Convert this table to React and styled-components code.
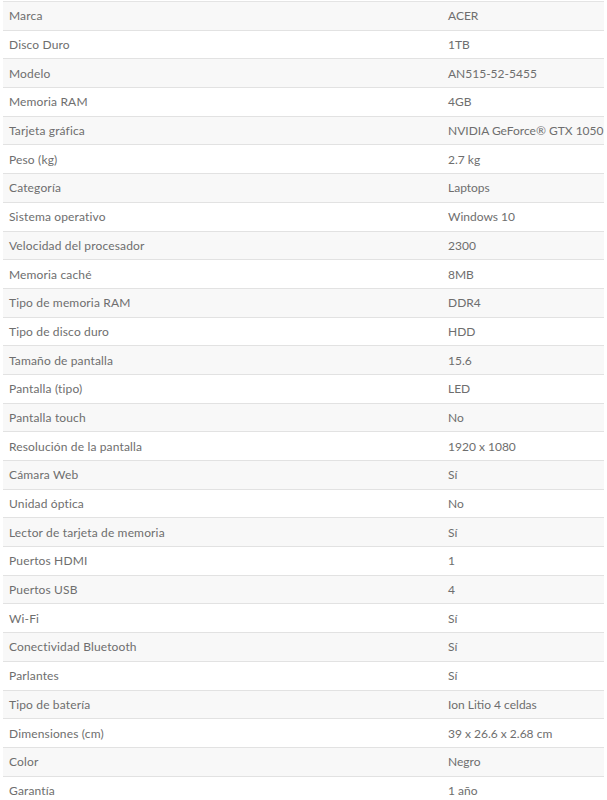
import { Fragment } from "react";
import styled, { createGlobalStyle } from "styled-components";

const Global = createGlobalStyle`
  body {
    margin: 0;
    background: #fff;
    font-family: Lato, "Open Sans", "Liberation Sans", sans-serif;
  }
`;

const Wrapper = styled.div`
  padding: 1px 3px 0 3px;
`;

const Table = styled.div`
  display: grid;
  grid-template-columns: 437px 1fr;
  border-top: 1px solid #e4e4e4;
`;

const Cell = styled.div`
  height: 27.7px;
  display: flex;
  align-items: center;
  padding-left: ${(p) => (p.$value ? "8px" : "6px")};
  background: ${(p) => (p.$odd ? "#f8f8f8" : "#fff")};
  border-bottom: 1px solid #e2e2e2;
  color: #6e6e6e;
  font-size: 12px;
  letter-spacing: ${(p) => (p.$value ? "0" : "0.15px")};
  white-space: nowrap;
`;

const rows = [
  ["Marca", "ACER"],
  ["Disco Duro", "1TB"],
  ["Modelo", "AN515-52-5455"],
  ["Memoria RAM", "4GB"],
  ["Tarjeta gráfica", "NVIDIA GeForce® GTX 1050"],
  ["Peso (kg)", "2.7 kg"],
  ["Categoría", "Laptops"],
  ["Sistema operativo", "Windows 10"],
  ["Velocidad del procesador", "2300"],
  ["Memoria caché", "8MB"],
  ["Tipo de memoria RAM", "DDR4"],
  ["Tipo de disco duro", "HDD"],
  ["Tamaño de pantalla", "15.6"],
  ["Pantalla (tipo)", "LED"],
  ["Pantalla touch", "No"],
  ["Resolución de la pantalla", "1920 x 1080"],
  ["Cámara Web", "Sí"],
  ["Unidad óptica", "No"],
  ["Lector de tarjeta de memoria", "Sí"],
  ["Puertos HDMI", "1"],
  ["Puertos USB", "4"],
  ["Wi-Fi", "Sí"],
  ["Conectividad Bluetooth", "Sí"],
  ["Parlantes", "Sí"],
  ["Tipo de batería", "Ion Litio 4 celdas"],
  ["Dimensiones (cm)", "39 x 26.6 x 2.68 cm"],
  ["Color", "Negro"],
  ["Garantía", "1 año"],
];

export default function App() {
  return (
    <>
      <Global />
      <Wrapper>
        <Table>
          {rows.map(([label, value], i) => (
            <Fragment key={label}>
              <Cell $odd={i % 2 === 0}>{label}</Cell>
              <Cell $odd={i % 2 === 0} $value>
                {value}
              </Cell>
            </Fragment>
          ))}
        </Table>
      </Wrapper>
    </>
  );
}
